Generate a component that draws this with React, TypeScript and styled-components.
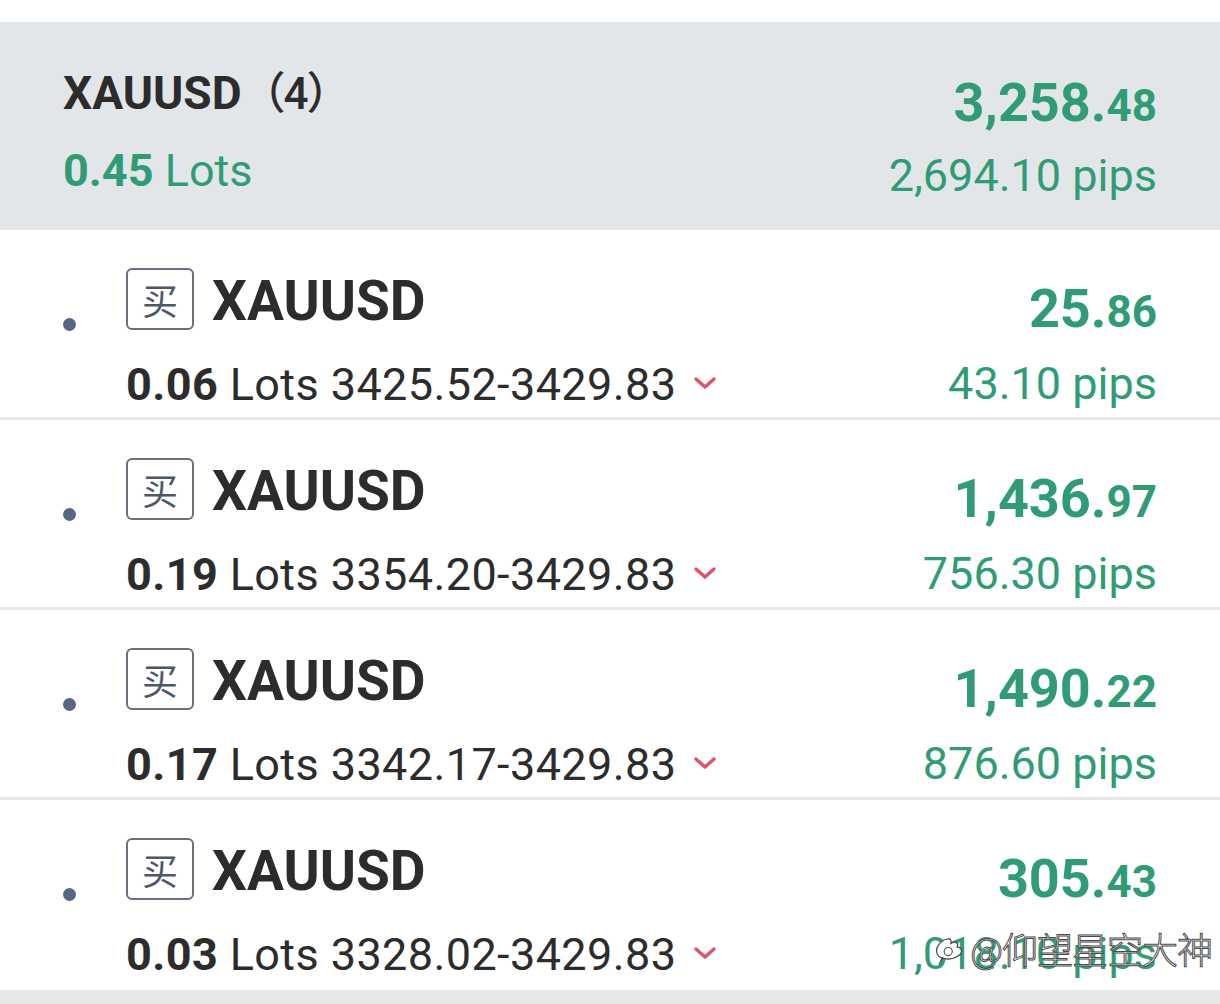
import React from 'react'
import styled, { createGlobalStyle } from 'styled-components'

type PositionType = {
	id: number
	lots: string
	open: string
	close: string
	profit: string
	cents: string
	pips: string
}

const positions: PositionType[] = [
	{ id: 1, lots: '0.06', open: '3425.52', close: '3429.83', profit: '25.', cents: '86', pips: '43.10' },
	{ id: 2, lots: '0.19', open: '3354.20', close: '3429.83', profit: '1,436.', cents: '97', pips: '756.30' },
	{ id: 3, lots: '0.17', open: '3342.17', close: '3429.83', profit: '1,490.', cents: '22', pips: '876.60' },
	{ id: 4, lots: '0.03', open: '3328.02', close: '3429.83', profit: '305.', cents: '43', pips: '1,018.10' },
]

const GlobalStyle = createGlobalStyle`
	body {
		margin: 0;
		background: #ffffff;
		font-family: Roboto, 'Noto Sans CJK SC', sans-serif;
	}
`

const Chevron = () => (
	<ChevronIcon viewBox="0 0 24 14" width="24" height="14">
		<path d="M3 3 L12 11 L21 3" fill="none" stroke="#e0516b" strokeWidth="3.4" strokeLinecap="round" strokeLinejoin="round" />
	</ChevronIcon>
)

const WeiboMark = () => (
	<svg viewBox="0 0 40 40" width="36" height="36">
		<path
			d="M17 10 C8 12 3 21 6 27 C9 33 22 34 29 29 C35 25 33 19 28 19 C30 14 26 12 21 15 C22 11 20 9 17 10 Z"
			fill="#ffffff"
			stroke="#4a4a4a"
			strokeWidth="1.4"
		/>
		<path d="M12 30 L8 38" stroke="#4a4a4a" strokeWidth="1.4" fill="none" />
		<circle cx="18" cy="24" r="4.5" fill="none" stroke="#4a4a4a" strokeWidth="1.2" />
	</svg>
)

export default function App() {
	const rows = positions.map(p => (
		<Row key={p.id}>
			<Dot />
			<Main>
				<TitleLine>
					<Badge>买</Badge>
					<Symbol>XAUUSD</Symbol>
				</TitleLine>
				<DetailLine>
					<LotsValue>{p.lots}</LotsValue> Lots {p.open}-{p.close}
					<Chevron />
				</DetailLine>
			</Main>
			<Side>
				<Profit>
					<ProfitMain>{p.profit}</ProfitMain>
					<ProfitCents>{p.cents}</ProfitCents>
				</Profit>
				<Pips>{p.pips} pips</Pips>
			</Side>
		</Row>
	))

	return (
		<Page>
			<GlobalStyle />
			<GroupHeader>
				<GroupLeft>
					<GroupTitle>
						XAUUSD<Count>（4）</Count>
					</GroupTitle>
					<GroupLots>
						<LotsValue>0.45</LotsValue> Lots
					</GroupLots>
				</GroupLeft>
				<GroupRight>
					<Profit>
						<ProfitMain>3,258.</ProfitMain>
						<ProfitCents>48</ProfitCents>
					</Profit>
					<Pips>2,694.10 pips</Pips>
				</GroupRight>
			</GroupHeader>
			<List>{rows}</List>
			<Footer />
			<Watermark>
				<WeiboMark />
				<WatermarkText>@仰望星空大神</WatermarkText>
			</Watermark>
		</Page>
	)
}

const Page = styled.div`
	position: relative;
	width: 1220px;
	height: 1004px;
	overflow: hidden;
	padding-top: 22px;
	box-sizing: border-box;
	background: #ffffff;
`

const GroupHeader = styled.div`
	height: 208px;
	box-sizing: border-box;
	background: #e3e6e9;
	display: flex;
	justify-content: space-between;
	align-items: flex-start;
	padding: 0 63px;
`

const GroupLeft = styled.div`
	display: flex;
	flex-direction: column;
	padding-top: 47px;
	gap: 31px;
`

const GroupRight = styled.div`
	display: flex;
	flex-direction: column;
	align-items: flex-end;
	padding-top: 53px;
	gap: 20px;
`

const GroupTitle = styled.div`
	font-size: 46px;
	line-height: 48px;
	font-weight: 700;
	color: #2c2c2c;
	white-space: nowrap;
`

const Count = styled.span`
	font-weight: 500;
	font-size: 44px;
	letter-spacing: -2px;
`

const GroupLots = styled.div`
	font-size: 45px;
	line-height: 44px;
	color: #2f9c75;
	white-space: nowrap;
`

const LotsValue = styled.span`
	font-weight: 700;
`

const List = styled.div`
	display: flex;
	flex-direction: column;
`

const Row = styled.div`
	height: 190px;
	box-sizing: border-box;
	border-bottom: 3px solid #e7e7e7;
	display: flex;
	align-items: flex-start;
	padding: 38px 63px 0 63px;

	&:last-child {
		border-bottom: none;
	}
`

const Dot = styled.span`
	width: 13px;
	height: 13px;
	border-radius: 50%;
	background: #566784;
	flex-shrink: 0;
	margin-top: 50px;
	margin-right: 50px;
`

const Main = styled.div`
	display: flex;
	flex-direction: column;
	gap: 33px;
	flex: 1;
`

const TitleLine = styled.div`
	display: flex;
	align-items: center;
	gap: 18px;
	height: 62px;
`

const Badge = styled.span`
	width: 68px;
	height: 62px;
	box-sizing: border-box;
	border: 2px solid #67717e;
	border-radius: 6px;
	display: flex;
	align-items: center;
	justify-content: center;
	font-family: 'Noto Sans CJK SC', sans-serif;
	font-size: 36px;
	font-weight: 400;
	color: #4d5765;
`

const Symbol = styled.span`
	font-size: 55px;
	line-height: 62px;
	font-weight: 700;
	color: #2c2c2c;
	margin-top: 4px;
`

const DetailLine = styled.div`
	display: flex;
	align-items: center;
	font-size: 45px;
	line-height: 44px;
	letter-spacing: 0.4px;
	color: #2c2c2c;
	white-space: pre;
`

const ChevronIcon = styled.svg`
	margin-left: 17px;
	margin-top: -4px;
`

const Side = styled.div`
	display: flex;
	flex-direction: column;
	align-items: flex-end;
	margin-top: 13px;
	gap: 22px;
`

const Profit = styled.div`
	display: flex;
	align-items: baseline;
	color: #2f9c75;
	font-weight: 700;
	line-height: 56px;
	white-space: nowrap;
`

const ProfitMain = styled.span`
	font-size: 54px;
`

const ProfitCents = styled.span`
	font-size: 44px;
`

const Pips = styled.div`
	font-size: 45px;
	line-height: 44px;
	color: #2f9c75;
	white-space: nowrap;
`

const Footer = styled.div`
	height: 20px;
	background: #e8e8e8;
`

const Watermark = styled.div`
	position: absolute;
	right: 8px;
	top: 922px;
	display: flex;
	align-items: center;
	gap: 2px;
	pointer-events: none;
`

const WatermarkText = styled.span`
	font-family: 'Noto Sans CJK SC', sans-serif;
	font-size: 36px;
	font-weight: 300;
	color: #ffffff;
	-webkit-text-stroke: 1px #4a4a4a;
	letter-spacing: -1px;
`
